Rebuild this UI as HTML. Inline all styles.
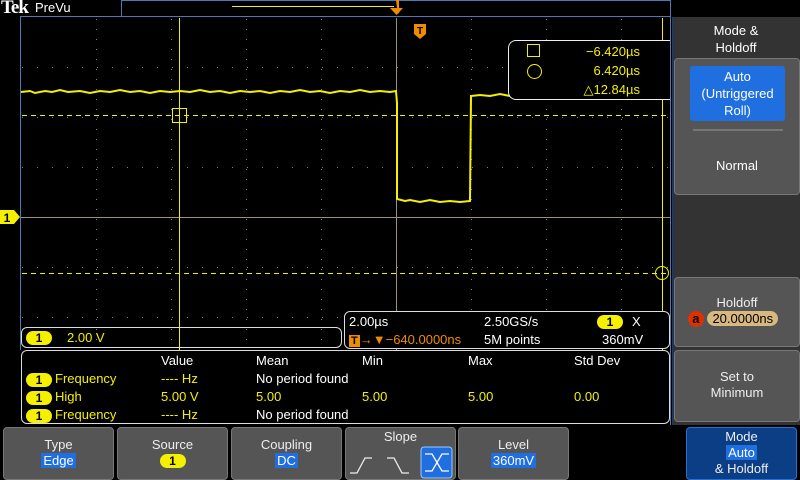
<!DOCTYPE html>
<html><head><meta charset="utf-8"><style>
*{margin:0;padding:0;box-sizing:border-box}
body{width:800px;height:480px;background:#000;position:relative;overflow:hidden;font-family:"Liberation Sans",sans-serif;font-size:13px;color:#fff}
.a{position:absolute}
.btn{position:absolute;background:#555;border:1px solid #777;border-radius:4px;text-align:center;color:#eee;font-size:13px;line-height:16px}
.hl{background:#1f6fe0;color:#fff;padding:0 2px}
.y{color:#f5f000}
.pill{display:inline-block;background:#f5f000;color:#000;border-radius:8px;width:26px;height:14px;line-height:14px;text-align:center;font-weight:bold;font-size:12px}
</style></head><body>
<div class="a" style="left:1px;top:-1px;font-family:'Liberation Serif',serif;font-weight:bold;font-size:19px;line-height:18px;letter-spacing:-1px">Tek</div>
<div class="a" style="left:35px;top:0;font-size:13px;line-height:15px">PreVu</div>
<div class="a" style="left:121px;top:0;width:550px;height:17px;border:1px solid #4a7ab8"></div>
<div class="a" style="left:232px;top:6px;width:162px;height:1px;background:#f5f000"></div>
<svg class="a" style="left:0;top:0" width="800" height="480" shape-rendering="crispEdges">
<line x1="20.5" y1="16" x2="20.5" y2="350" stroke="#4a7ab8"/>
<line x1="20" y1="16.5" x2="671" y2="16.5" stroke="#4a7ab8"/>
<line x1="670.5" y1="16" x2="670.5" y2="425" stroke="#4a7ab8"/>
<path d="M96.5 19v330M171.5 19v330M246.5 19v330M321.5 19v330M471.5 19v330M546.5 19v330M621.5 19v330" stroke="#8a8060" stroke-width="1" stroke-dasharray="1 9"/>
<path d="M22 67.5h648M22 117.5h648M22 167.5h648M22 267.5h648M22 317.5h648" stroke="#8a8060" stroke-width="1" stroke-dasharray="1 14"/>
<line x1="21" y1="217.5" x2="670" y2="217.5" stroke="#a09070"/>
<line x1="396.5" y1="18" x2="396.5" y2="350" stroke="#a09070"/>
<line x1="22" y1="115.5" x2="668" y2="115.5" stroke="#f5f000" stroke-dasharray="5 4"/>
<line x1="22" y1="273.5" x2="668" y2="273.5" stroke="#f5f000" stroke-dasharray="5 4"/>
<line x1="179.5" y1="18" x2="179.5" y2="350" stroke="#f5f000"/>
<line x1="662.5" y1="18" x2="662.5" y2="350" stroke="#f5f000"/>
<rect x="172.5" y="108.5" width="14" height="14" fill="none" stroke="#f5f000"/>
<circle cx="662" cy="273" r="6.5" fill="none" stroke="#f5f000" shape-rendering="auto"/>
<polyline fill="none" stroke="#f5f000" stroke-width="2" shape-rendering="auto" points="21,92 30,91 35,93 45,91 52,92 60,90 68,92 80,91 90,93 100,91 110,92 120,90 130,92 140,91 150,93 160,91 170,92 180,91 190,92 200,90 210,92 220,91 230,93 240,91 250,92 260,91 270,93 280,91 290,92 300,90 310,92 320,91 330,93 340,91 350,92 360,90 370,92 380,91 390,92 396,91 397,103 397,199 405,201 410,200 420,202 430,200 440,202 450,201 460,202 470,201 471,96 480,95 490,96 500,94 510,96 515,97"/>
<path d="M396 0h3v8l3 0-4 6-4-6h3z" fill="#f08c00" shape-rendering="auto"/>
<path d="M390 8h13l-6.5 7z" fill="#f08c00" shape-rendering="auto"/>
<path d="M414 24h12v10l-6 5-6-5z" fill="#f08c00" shape-rendering="auto"/><text x="420" y="34" font-size="10" font-weight="bold" text-anchor="middle" fill="#000" font-family="Liberation Sans">T</text>
<path d="M0 210h14l6 7-6 7h-14z" fill="#f5f000" shape-rendering="auto"/><text x="7" y="222" font-size="12" font-weight="bold" text-anchor="middle" fill="#000" font-family="Liberation Sans">1</text>
</svg>
<div class="a" style="left:508px;top:40px;width:162px;height:60px;border:1px solid #eee;border-right:none;border-radius:8px 0 0 8px;background:#000"></div>
<div class="a" style="left:527px;top:44px;width:13px;height:13px;border:1px solid #f5f000"></div>
<div class="a" style="left:527px;top:64px;width:15px;height:15px;border:1px solid #f5f000;border-radius:50%"></div>
<div class="a y" style="left:560px;top:42px;width:80px;text-align:right;line-height:19px">−6.420µs<br>6.420µs<br>△12.84µs</div>
<div class="a" style="left:21px;top:327px;width:321px;height:21px;border:1px solid #ddd;border-radius:6px"></div>
<div class="a" style="left:26px;top:330px"><span class="pill">1</span></div>
<div class="a y" style="left:67px;top:330px">2.00 V</div>
<div class="a" style="left:344px;top:311px;width:326px;height:38px;border:1px solid #ddd;border-radius:6px;background:#000"></div>
<div class="a" style="left:349px;top:313px;line-height:18px">2.00µs</div>
<div class="a" style="left:349px;top:331px;line-height:18px;color:#f08c00"><span style="background:#f08c00;color:#000;font-weight:bold;font-size:11px;padding:0 2px">T</span>→▼−640.0000ns</div>
<div class="a" style="left:484px;top:313px;line-height:18px">2.50GS/s<br>5M points</div>
<div class="a" style="left:597px;top:314px"><span class="pill">1</span></div>
<div class="a" style="left:632px;top:313px;line-height:18px">X</div>
<div class="a" style="left:602px;top:331px;line-height:18px">360mV</div>
<div class="a" style="left:21px;top:350px;width:649px;height:74px;border:1px solid #ddd;border-radius:6px"></div>
<div class="a" style="left:0;top:352px;width:670px;line-height:18px">
<div class="a" style="left:161px;top:0">Value</div><div class="a" style="left:256px;top:0">Mean</div><div class="a" style="left:362px;top:0">Min</div><div class="a" style="left:468px;top:0">Max</div><div class="a" style="left:574px;top:0">Std Dev</div>
<div class="a" style="left:26px;top:19px"><span class="pill">1</span></div><div class="a y" style="left:55px;top:18px">Frequency</div><div class="a y" style="left:161px;top:18px">---- Hz</div><div class="a" style="left:256px;top:18px">No period found</div>
<div class="a" style="left:26px;top:37px"><span class="pill">1</span></div><div class="a y" style="left:55px;top:36px">High</div><div class="a y" style="left:161px;top:36px">5.00 V</div><div class="a y" style="left:256px;top:36px">5.00</div><div class="a y" style="left:362px;top:36px">5.00</div><div class="a y" style="left:468px;top:36px">5.00</div><div class="a y" style="left:574px;top:36px">0.00</div>
<div class="a" style="left:26px;top:55px"><span class="pill">1</span></div><div class="a y" style="left:55px;top:54px">Frequency</div><div class="a y" style="left:161px;top:54px">---- Hz</div><div class="a" style="left:256px;top:54px">No period found</div>
</div>
<div class="a" style="left:672px;top:17px;width:128px;height:408px;background:#333;border-left:1px solid #1a3a70"></div>
<div class="a" style="left:672px;top:22px;width:128px;text-align:center;line-height:17px">Mode &amp;<br>Holdoff</div>
<div class="btn" style="left:674px;top:58px;width:126px;height:137px"></div>
<div class="a" style="left:690px;top:66px;width:95px;height:55px;background:#1f6fe0;border-radius:3px;text-align:center;line-height:17px;padding-top:2px">Auto<br>(Untriggered<br>Roll)</div>
<div class="a" style="left:693px;top:129px;width:90px;height:2px;background:#777"></div>
<div class="a" style="left:674px;top:158px;width:126px;text-align:center">Normal</div>
<div class="btn" style="left:674px;top:277px;width:126px;height:70px;padding-top:17px">Holdoff<br><span style="display:inline-block;background:#e03000;color:#000;border-radius:50%;width:16px;height:16px;line-height:16px;font-weight:bold;margin-left:-8px">a</span> <span style="display:inline-block;background:#d8b880;color:#000;border-radius:8px;padding:0 5px;line-height:15px">20.0000ns</span></div>
<div class="btn" style="left:674px;top:350px;width:126px;height:72px;padding-top:18px">Set to<br>Minimum</div>
<div class="btn" style="left:3px;top:427px;width:111px;height:53px;padding-top:9px">Type<br><span class="hl">Edge</span></div>
<div class="btn" style="left:117px;top:427px;width:111px;height:53px;padding-top:9px">Source<br><span class="pill" style="width:26px">1</span></div>
<div class="btn" style="left:231px;top:427px;width:111px;height:53px;padding-top:9px">Coupling<br><span class="hl">DC</span></div>
<div class="btn" style="left:345px;top:427px;width:111px;height:53px;padding-top:1px">Slope</div>
<svg class="a" style="left:345px;top:443px" width="111" height="37">
<path d="M5 30h7l8-15h7" fill="none" stroke="#eee" stroke-width="1.3"/>
<path d="M42 15h7l8 15h7" fill="none" stroke="#eee" stroke-width="1.3"/>
<rect x="76" y="4" width="31" height="31" rx="3" fill="#1f6fe0" stroke="#9cf"/>
<path d="M80 11h7l10 17h7M80 28h7l10-17h7" fill="none" stroke="#fff" stroke-width="1.3"/>
</svg>
<div class="btn" style="left:458px;top:427px;width:111px;height:53px;padding-top:9px">Level<br><span class="hl">360mV</span></div>
<div class="btn" style="left:686px;top:427px;width:111px;height:53px;padding-top:1px;background:#0c3e86;border-color:#2a70d0;line-height:16px">Mode<br><span class="hl">Auto</span><br>&amp; Holdoff</div>
</body></html>
